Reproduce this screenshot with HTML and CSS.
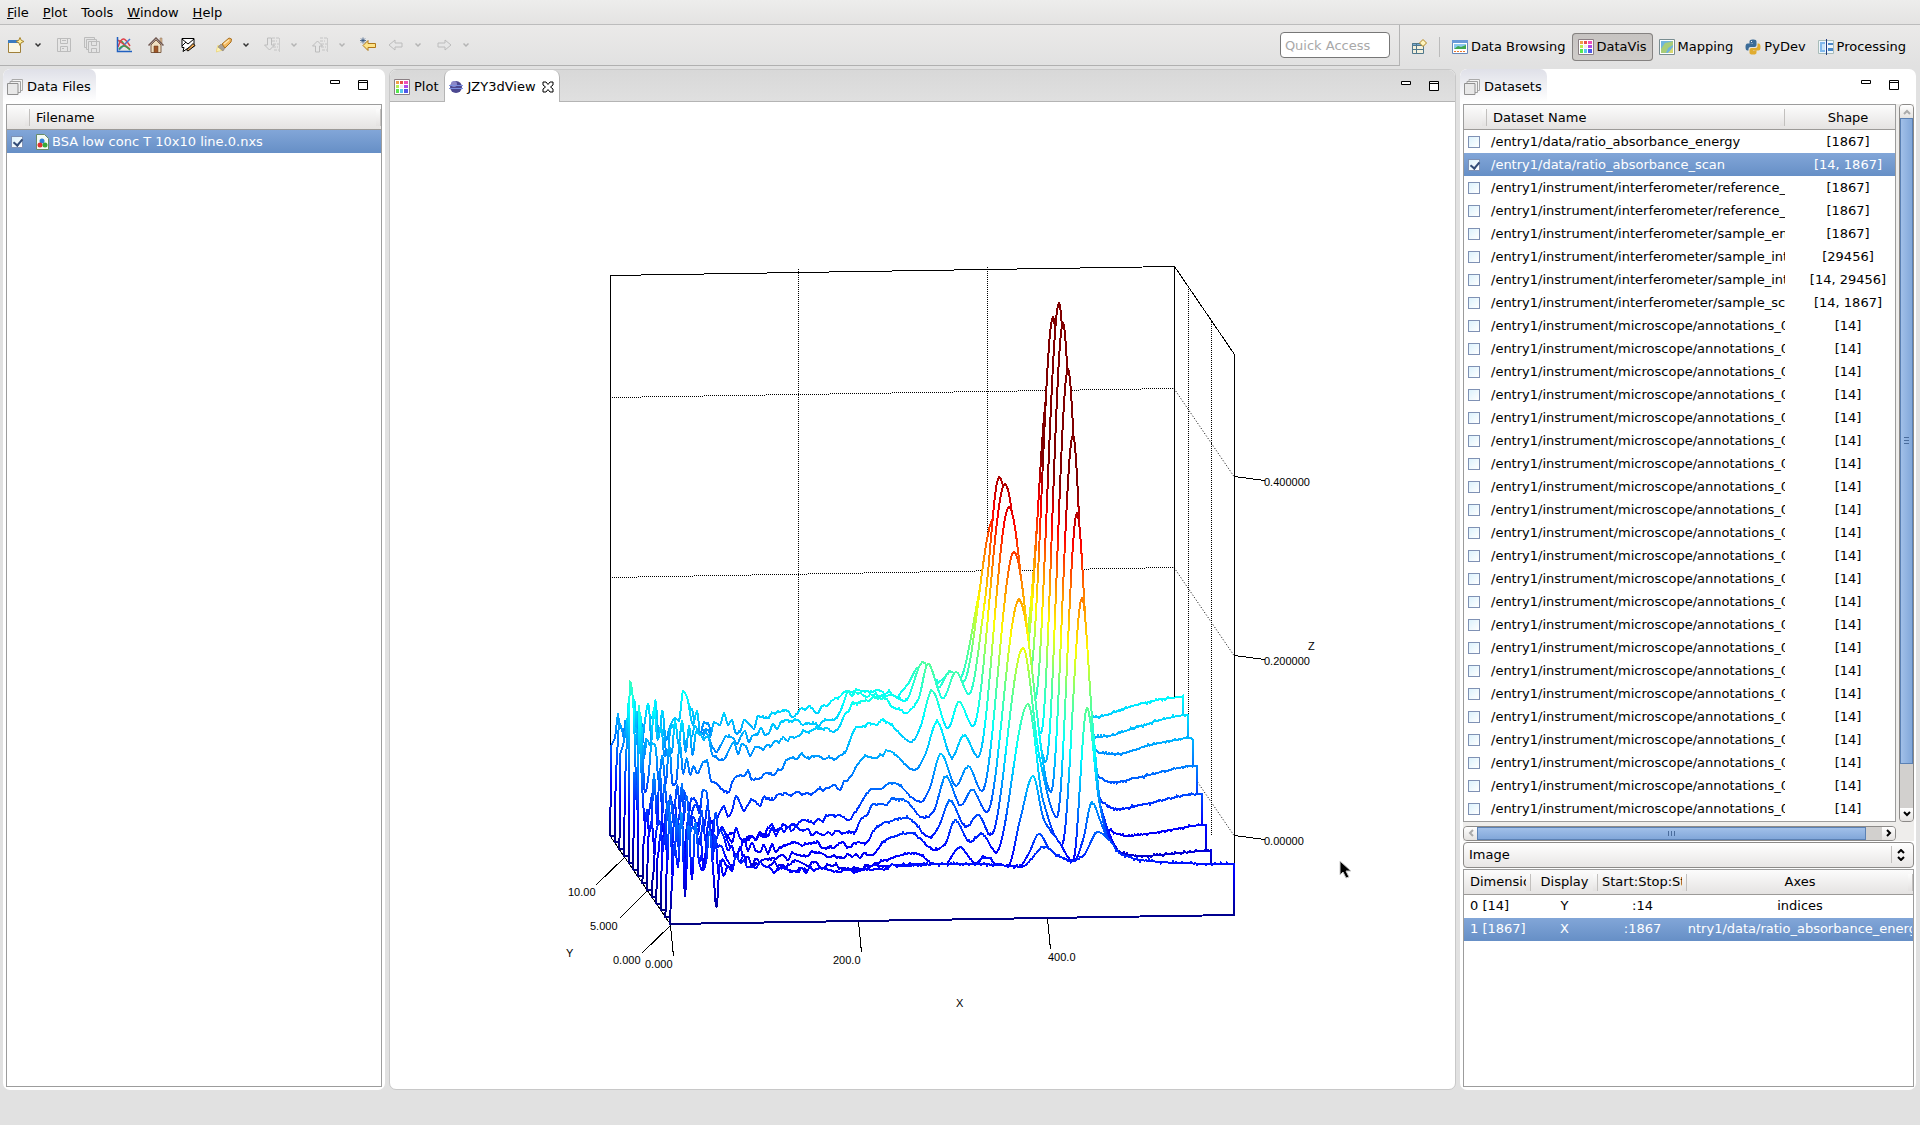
FILE: index.html
```
<!DOCTYPE html>
<html lang="en">
<head>
  <title>DataVis</title>
  <meta charset="UTF-8">
  <meta name="viewport" content="width=device-width, initial-scale=1.0">
  <link rel="stylesheet" href="styles.css">
</head>
<body>
  <!-- shared icons -->
  <svg class="defs" width="0" height="0">
    <symbol id="i-arrow" viewBox="0 0 6 6"><path d="M.5 1.500L3 4l2.500-2.500" fill="none" stroke="currentColor" stroke-width="1.500"/></symbol>
    <symbol id="i-stack" viewBox="0 0 16 16">
      <path d="M5 .5h10.500v11H5z" fill="#f4f4f4" stroke="#aaa"/>
      <path d="M3 2.500h10.500v11H3z" fill="#f0f0f0" stroke="#a0a0a0"/>
      <path d="M.5 4.500h10.500v11H.5z" fill="#e8e8e8" stroke="#909090"/>
    </symbol>
    <symbol id="i-grid" viewBox="0 0 16 16">
      <path d="M.5.5h15v15H.5z" fill="#fff" stroke="#8a7f84"/>
      <path d="M2 2h3v3H2z" fill="#f0a04a"/><path d="M6 2h3v3H6z" fill="#e8504a"/><path d="M10 2h4v3h-4z" fill="#ee50b8"/>
      <path d="M2 6h3v3H2z" fill="#b8ee50"/><path d="M6 6h3v3H6z" fill="#eee"/><path d="M10 6h4v3h-4z" fill="#b04ae8"/>
      <path d="M2 10h3v4H2z" fill="#58e850"/><path d="M6 10h3v4H6z" fill="#58c8ee"/><path d="M10 10h4v4h-4z" fill="#5058e8"/>
    </symbol>
    <symbol id="i-min" viewBox="0 0 10 12"><path d="M.5 1.500h9v3h-9z" fill="#fff" stroke="#000"/></symbol>
    <symbol id="i-max" viewBox="0 0 10 12"><path d="M.5 1.500h9v9h-9zM.5 3.500h9" fill="#fff" stroke="#000"/></symbol>
    <symbol id="i-back" viewBox="0 0 16 16"><path d="M1 8l6-5v3h7v4H7v3z" fill="currentColor" stroke="var(--edge)" stroke-linejoin="round"/></symbol>
    <symbol id="i-lines" viewBox="0 0 16 16">
      <path d="M8 1h7M8 4h5M9 7h6M9 10h5M10 13h5" stroke="#c4c4c4" stroke-dasharray="3 1"/>
      <path d="M15.500 1v14" stroke="#ccc"/>
    </symbol>
  </svg>

  <nav class="menubar">
    <a href="#"><u>F</u>ile</a>
    <a href="#"><u>P</u>lot</a>
    <a href="#">Tools</a>
    <a href="#"><u>W</u>indow</a>
    <a href="#"><u>H</u>elp</a>
  </nav>

  <header class="topbar">
    <div class="toolbar">
      <button class="tool" title="New"><svg viewBox="0 0 16 16">
        <path d="M.5 3.500h12v12H.5z" fill="#fbf7e4" stroke="#a0803a"/><path d="M0 3h12v3H0z" fill="#3c7cc0"/>
        <path d="M12 .5l1.200 2.800L16 4.500l-2.800 1.200L12 8.500l-1.200-2.800L8 4.500l2.800-1.200z" fill="#fdf0a0" stroke="#a8842c"/></svg></button>
      <button class="drop" title="New menu"><svg><use href="#i-arrow"/></svg></button>
      <i class="sep"></i>
      <button class="tool" title="Save" disabled><svg viewBox="0 0 16 16" fill="none" stroke="#bcbcbc">
        <path d="M1.500 1.500h13v13h-13zM4.500 1.500v5h7v-5M4.500 14.500v-5h7v5M6 3.500h4M6 11.500h2"/></svg></button>
      <button class="tool" title="Save All" disabled><svg viewBox="0 0 16 16" fill="#e4e4e4" stroke="#bcbcbc">
        <path d="M.5.5h10v10H.5z"/><path d="M2.500 2.500h10v10h-10z"/><path d="M4.500 4.500h11v11h-11zM7.500 4.500v4h5v-4M7.500 15.500v-4h5v4"/></svg></button>
      <i class="sep"></i>
      <button class="tool" title="Plot"><svg viewBox="0 0 16 16" fill="none" stroke-width="1.500">
        <path d="M3 5c3-5 5 6 11 7" stroke="#3c9c50"/><path d="M2 10c4-12 7-9 12-1" stroke="#e04048"/><path d="M3 13L9 7l5-5" stroke="#4878d0"/><path d="M2 3l12 9" stroke="#e04048"/><path d="M3 12c3-4 7-4 11 1" stroke="#3c9c50"/>
        <path d="M1.500 0v14.500H16" stroke="#2060c0"/></svg></button>
      <i class="sep"></i>
      <button class="tool" title="Home"><svg viewBox="0 0 16 16">
        <path d="M12 1h2v5h-2z" fill="#d8b890" stroke="#8a6a50" stroke-width=".5"/><path d="M3 8l5-5 5 5v7.500H3z" fill="#f0e0c0" stroke="#806048"/>
        <path d="M.5 8.500L8 1l7.500 7.500" fill="none" stroke="#705850" stroke-width="1.500"/><path d="M6 9h4v6.500H6z" fill="#a05828" stroke="#603820" stroke-width=".5"/></svg></button>
      <i class="sep"></i>
      <button class="tool" title="Feedback"><svg viewBox="0 0 16 16">
        <path d="M2 1.500h12v8l-5 1-6 4 1-4H2z" fill="#fff" stroke="#000"/><path d="M2 2l6 5 6-5M2 9l4-4" fill="none" stroke="#000"/>
        <path d="M6.500 13L13 6.500l2 2L8 14z" fill="#f0a850" stroke="#000"/></svg></button>
      <i class="sep wide"></i>
      <button class="tool" title="Search"><svg viewBox="0 0 16 16">
        <path d="M0 15l2-7 5 5z" fill="#fff4b0" stroke="#e8c850" stroke-width=".5"/><path d="M5 7l4 4-2 3-5-4z" fill="#a8a098" stroke="#787068" stroke-width=".5"/>
        <path d="M6 7l7-6 2.500 1-.5 3-6 6z" fill="#f4b860" stroke="#a87020"/><path d="M8 7l5-4" stroke="#fde8b8" stroke-width="1.500"/></svg></button>
      <button class="drop" title="Search menu"><svg><use href="#i-arrow"/></svg></button>
      <i class="sep"></i>
      <button class="tool" title="Next annotation" disabled><svg viewBox="0 0 16 16"><use href="#i-lines"/>
        <path d="M3.500 1h4v7h3L5.500 13l-5-5h3z" fill="#e6e6e6" stroke="#bcbcbc"/></svg></button>
      <button class="drop" title="Next menu" disabled><svg><use href="#i-arrow"/></svg></button>
      <i class="sep"></i>
      <button class="tool" title="Previous annotation" disabled><svg viewBox="0 0 16 16"><use href="#i-lines"/>
        <path d="M3.500 15h4V9h3L5.500 4l-5 5h3z" fill="#e6e6e6" stroke="#bcbcbc"/></svg></button>
      <button class="drop" title="Previous menu" disabled><svg><use href="#i-arrow"/></svg></button>
      <i class="sep"></i>
      <button class="tool" title="Last edit location"><svg viewBox="0 0 16 16">
        <path d="M3 8.500l5-5v3h7.500v4H8v3z" fill="#fde288" stroke="#b07818"/><path d="M0 3.500h6M3 .5v6M1 1.500l4 4M5 1.500l-4 4" stroke="#30507c" stroke-width=".8"/></svg></button>
      <button class="tool" title="Back" disabled><svg><use href="#i-back"/></svg></button>
      <button class="drop" title="Back menu" disabled><svg><use href="#i-arrow"/></svg></button>
      <i class="sep"></i>
      <button class="tool flip" title="Forward" disabled><svg><use href="#i-back"/></svg></button>
      <button class="drop" title="Forward menu" disabled><svg><use href="#i-arrow"/></svg></button>
      <input class="quick-access" type="text" placeholder="Quick Access" aria-label="Quick Access">
    </div>
    <div class="perspectives">
      <button class="persp open" title="Open Perspective"><svg viewBox="0 0 16 16">
        <path d="M1.500 4.500h11v10h-11z" fill="#f4f0dc" stroke="#50788c"/><path d="M1.500 4.500h11v2h-11zM5.500 4v10.500M1.500 10.500h11" fill="#78a8d0" stroke="#50788c"/>
        <path d="M12 .5l3.500 3.500L12 7.500 8.500 4z" fill="#fdf4c0" stroke="#b08420"/></svg></button>
      <i class="bar"></i>
      <button class="persp"><svg viewBox="0 0 16 16">
        <path d="M.5 1.500h15v13H.5z" fill="#fff" stroke="#6888b8"/><path d="M0 1h16v3H0z" fill="#6a9ad8"/><path d="M2 5h12v5H2z" fill="#8cc8f0"/><path d="M2 10l4-3 3 1 5-2v4z" fill="#40a850"/><path d="M2 12.500h12" stroke="#e87830" stroke-dasharray="2 1"/></svg>Data Browsing</button>
      <button class="persp active"><svg><use href="#i-grid"/></svg>DataVis</button>
      <button class="persp"><svg viewBox="0 0 16 16">
        <path d="M.5.5h15v15H.5z" fill="#fff" stroke="#788c90"/><path d="M2 2h12v12H2z" fill="#70b4dc"/><path d="M2 10l4-6 5-1 3-1v4l-5 3-2 5H2z" fill="#a8cc78"/><path d="M9 14l5-6v6z" fill="#d8d870"/></svg>Mapping</button>
      <button class="persp"><svg viewBox="0 0 16 16">
        <path d="M4.500 4.500V2.500Q4.500.5 7.500.5h1q3 0 3 2V6q0 2-2 2h-4q-2 0-2 2v1.500H2.500q-2 0-2-3.500t2-3.500H8V4z" fill="#3c6c98"/>
        <path d="M11.500 11.500v2q0 2-3 2h-1q-3 0-3-2V11q0-2 2-2h4q2 0 2-2V4.500h1q2 0 2 3.500t-2 3.500H8v.5z" fill="#e0ac30"/><path d="M6 2h1v1H6z" fill="#fff"/></svg>PyDev</button>
      <button class="persp"><svg viewBox="0 0 16 16">
        <path d="M.5 1.500h15v13H.5z" fill="#eef6fc" stroke="#a8bcb8"/><path d="M2 3h5v10H2z" fill="#80b8ec"/><path d="M4 5h3v6H4z" fill="#c8e4f8"/><path d="M10 4h5v2h-5zM10 9h5v3h-5z" fill="#4888c8"/><path d="M8.500 0v16" stroke="#203c80"/></svg>Processing</button>
    </div>
  </header>

  <main class="workbench">
    <section class="panel">
      <div class="tabs plain">
        <button class="tab soft"><svg><use href="#i-stack"/></svg>Data Files</button>
        <span class="win"><button title="Minimize"><svg><use href="#i-min"/></svg></button><button title="Maximize"><svg><use href="#i-max"/></svg></button></span>
      </div>
      <div class="panel-body">
        <div class="grid-box fill">
          <table class="grid files">
            <colgroup><col class="c-check"><col></colgroup>
            <thead><tr><th></th><th>Filename</th></tr></thead>
            <tbody>
              <tr class="selected">
                <td><input type="checkbox" id="file0" checked></td>
                <td><label for="file0"><svg viewBox="0 0 16 16">
                  <path d="M2.500.5h8l4 4v11h-12z" fill="#f4faf4" stroke="#688c68"/><circle cx="8" cy="7" r="2.500" fill="#3080d8"/><circle cx="6" cy="11" r="2.500" fill="#e03030"/><circle cx="11" cy="11" r="2.500" fill="#38a838"/></svg>BSA low conc T 10x10 line.0.nxs</label></td>
              </tr>
            </tbody>
          </table>
        </div>
      </div>
    </section>

    <section class="panel editor">
      <div class="tabs">
        <button class="tab"><svg><use href="#i-grid"/></svg>Plot</button>
        <button class="tab current"><svg viewBox="0 0 16 16">
          <circle cx="8" cy="8" r="6" fill="#4c4890"/><circle cx="6" cy="5" r="3" fill="#8c88c8"/><path d="M1 6.500h14M1 9.500h14" stroke="#7c90e0"/></svg>JZY3dView
          <svg class="close" viewBox="0 0 12 12"><path d="M1 1h3l2 2.500L8 1h3v3L8.500 6 11 8v3H8L6 8.500 4 11H1V8l2.500-2L1 4z" fill="#fff" stroke="#000"/></svg></button>
        <span class="win"><button title="Minimize"><svg><use href="#i-min"/></svg></button><button title="Maximize"><svg><use href="#i-max"/></svg></button></span>
      </div>
      <div class="plot">
        <svg id="chart" viewBox="390 102 1065 987">
          <g class="dots">
            <path d="M798.500 269V836M987.500 267V836M1188.500 287V836M1211.500 320V836"/>
            <path d="M610 397.500L1174 388.500M610 577.500L1174 567.500M610 757.500L1174 747.500"/>
            <path class="side" d="M1174 388.500L1234 476.500M1174 567.500L1234 655.500M1174 747.500L1234 835.500"/>
          </g>
          <g class="axes">
            <path d="M610.500 836V275.500L1174.500 266.500V747M1174.500 266.500L1234.500 354.500V915"/>
            <path d="M1234 476.500l31 4M1234 655.500l31 4M1234 835.500l31 4"/>
            <path d="M624.500 857.500l-28 27M647.500 890.500l-28 28M670.500 925.500l-28 27M610.500 836.500l60 88"/>
            <path d="M670.500 925.500l3 31M858.500 921.500l3 31M1047.500 918.500l3 31"/>
          </g>
          <g id="traces"></g>
          <g class="labels">
            <text x="1264" y="486">0.400000</text>
            <text x="1264" y="665">0.200000</text>
            <text x="1264" y="845">0.00000</text>
            <text x="1308" y="650">Z</text>
            <text x="568" y="896">10.00</text>
            <text x="590" y="930">5.000</text>
            <text x="613" y="964">0.000</text>
            <text x="645" y="968">0.000</text>
            <text x="833" y="964">200.0</text>
            <text x="1048" y="961">400.0</text>
            <text x="566" y="957">Y</text>
            <text x="956" y="1007">X</text>
          </g>
          <path class="pointer" d="M1340 861v14l3-3 3 6 3-1-3-6h5z"/>
        </svg>
      </div>
    </section>

    <section class="panel">
      <div class="tabs plain">
        <button class="tab soft"><svg><use href="#i-stack"/></svg>Datasets</button>
        <span class="win"><button title="Minimize"><svg><use href="#i-min"/></svg></button><button title="Maximize"><svg><use href="#i-max"/></svg></button></span>
      </div>
      <div class="panel-body">
        <div class="scroll-area">
          <div class="grid-box">
            <table class="grid datasets">
              <colgroup><col class="c-check"><col><col class="c-shape"></colgroup>
              <thead><tr><th></th><th>Dataset Name</th><th>Shape</th></tr></thead>
              <tbody id="datasets"></tbody>
            </table>
          </div>
          <div class="scroll vertical">
            <button class="off" title="Up"><svg viewBox="0 0 8 8"><path d="M1 6l3-3 3 3"/></svg></button>
            <div class="thumb"><i></i></div>
            <div class="track"></div>
            <button title="Down"><svg viewBox="0 0 8 8"><path d="M1 2l3 3 3-3"/></svg></button>
          </div>
          <div class="scroll horizontal">
            <button class="off" title="Left"><svg viewBox="0 0 8 8"><path d="M6 1L3 4l3 3"/></svg></button>
            <div class="thumb"><i></i></div>
            <div class="track"></div>
            <button title="Right"><svg viewBox="0 0 8 8"><path d="M2 1l3 3-3 3"/></svg></button>
          </div>
        </div>
        <div class="combo">
          <select aria-label="Plot type"><option>Image</option><option>Line</option></select>
          <svg viewBox="0 0 8 12"><path d="M1 4l3-3 3 3M1 8l3 3 3-3"/></svg>
        </div>
        <div class="grid-box slice-box">
          <table class="grid slices">
            <colgroup><col class="c-dim"><col class="c-dim"><col class="c-slice"><col></colgroup>
            <thead><tr><th>Dimension</th><th>Display</th><th>Start:Stop:Step</th><th>Axes</th></tr></thead>
            <tbody>
              <tr><td>0 [14]</td><td>Y</td><td>:14</td><td><span>indices</span></td></tr>
              <tr class="selected"><td>1 [1867]</td><td>X</td><td>:1867</td><td><span>/entry1/data/ratio_absorbance_energy</span></td></tr>
            </tbody>
          </table>
        </div>
      </div>
    </section>
  </main>
  <script src="app.js"></script>
</body>
</html>
```
FILE: styles.css
```
:root {
  --bg: #e1e1e1;
  --line: #b4b4b4;
  --grid-border: #9c9c9c;
  --select-top: #82a6d8;
  --select-bottom: #668fc6;
}
* {
  box-sizing: border-box;
  margin: 0;
  padding: 0;
}
body {
  height: 100vh;
  display: flex;
  flex-direction: column;
  background: var(--bg);
  color: #000;
  font: 13px/16px "DejaVu Sans", sans-serif;
  overflow: hidden;
}
button, input, select {
  font: inherit;
  color: inherit;
  border: none;
  background: none;
}
svg {
  flex: none;
}
.defs {
  position: absolute;
}

/* menu bar */
.menubar {
  display: flex;
  align-items: center;
  gap: 14px;
  height: 25px;
  padding: 2px 7px 0;
  background: linear-gradient(#ededec, #e4e3e2);
  border-bottom: 1px solid #bcbcbc;
}
.menubar a {
  color: #000;
  text-decoration: none;
}

/* toolbar */
.topbar {
  display: flex;
  height: 41px;
  margin-bottom: 3px;
  background: linear-gradient(#ebeae9, #e1e1e1);
}
.toolbar {
  flex: 1;
  display: flex;
  align-items: center;
  padding: 0 9px 0 2px;
  border-right: 1px solid var(--line);
  border-bottom: 1px solid #b0b0b0;
}
.tool {
  width: 28px;
  height: 24px;
  padding: 4px 6px;
  color: #e6e6e6;
  --edge: #bcbcbc;
}
.tool svg {
  display: block;
  width: 16px;
  height: 16px;
}
.flip svg {
  transform: scaleX(-1);
}
.drop {
  width: 16px;
  height: 24px;
  color: #333;
}
.drop:disabled {
  color: #b4b4b4;
}
.drop svg {
  display: block;
  width: 6px;
  height: 6px;
  margin: 0 5px;
}
.sep {
  width: 4px;
}
.sep.wide {
  width: 8px;
}
.quick-access {
  width: 110px;
  height: 26px;
  margin-left: auto;
  padding: 0 4px;
  background: #fff;
  border: 1px solid #777;
  border-radius: 4px;
}
.quick-access::placeholder {
  color: #a8a8a8;
  opacity: 1;
}
.perspectives {
  display: flex;
  align-items: center;
  padding: 2px 8px 0 5px;
}
.persp {
  display: flex;
  align-items: center;
  gap: 3px;
  height: 28px;
  padding: 0 6px;
  border-radius: 4px;
}
.persp svg {
  width: 16px;
  height: 16px;
}
.persp.active {
  background: linear-gradient(#c6c3c1, #d0cdca);
  box-shadow: inset 0 0 0 1px #858281;
}
.bar {
  width: 1px;
  height: 20px;
  margin: 0 6px;
  background: #bbb;
}

/* workbench */
.workbench {
  flex: 1;
  min-height: 0;
  display: grid;
  grid-template-columns: minmax(0, 382fr) minmax(0, 1067fr) minmax(0, 456fr);
  gap: 4px;
  padding: 0 4px 35px 3px;
}
.panel {
  display: flex;
  flex-direction: column;
  min-height: 0;
  background: #fff;
  border-radius: 7px;
  overflow: hidden;
}
.editor {
  border: 1px solid #c8c8c8;
}
.tabs {
  display: flex;
  height: 32px;
  background: linear-gradient(#d8d8d8, #e0e0e0);
  box-shadow: inset 0 -1px #b4b4b4;
}
.tabs.plain {
  height: 33px;
  background: none;
  box-shadow: none;
}
.tab {
  display: flex;
  align-items: center;
  gap: 4px;
  padding: 2px 5px 0 4px;
}
.tab svg {
  width: 16px;
  height: 16px;
}
.tab.soft {
  background: linear-gradient(#dfe0e8, #fff);
  border-radius: 7px 7px 0 0;
}
.tab.current {
  padding-left: 3px;
  background: #fff;
  border: 1px solid #b4b4b4;
  border-width: 0 1px;
  border-radius: 7px 7px 0 0;
}
.tab .close {
  width: 12px;
  height: 12px;
  margin-left: 2px;
}
.win {
  display: flex;
  gap: 18px;
  margin: 10px 17px 0 auto;
}
.editor .win {
  margin-right: 16px;
}
.win button,
.win svg {
  display: block;
  width: 10px;
  height: 12px;
}
.panel-body {
  flex: 1;
  min-height: 0;
  display: flex;
  flex-direction: column;
  padding: 2px 2px 3px 3px;
}

/* tables */
.grid-box {
  min-width: 0;
  min-height: 0;
  background: #fff;
  border: 1px solid var(--grid-border);
  overflow: hidden;
}
.grid-box.fill {
  flex: 1;
  margin-right: 1px;
}
.slice-box {
  flex: 217 0 0;
}
.grid {
  width: 100%;
  table-layout: fixed;
  border-collapse: collapse;
}
.grid th,
.grid td {
  padding: 0 4px;
  font-weight: normal;
  text-align: center;
  white-space: nowrap;
  overflow: hidden;
}
.grid th {
  position: relative;
  height: 25px;
  background: linear-gradient(#fcfcfc, #e4e2e1);
  box-shadow: inset 0 -1px #9c9a98;
}
.grid th::after {
  content: "";
  position: absolute;
  right: 0;
  top: 4px;
  width: 4px;
  height: 17px;
  background: inherit;
  border-right: 1px solid #c2c0be;
}
.datasets th:last-child::after {
  display: none;
}
.grid td {
  height: 23px;
}
.grid .selected td {
  color: #fff;
}
.grid .selected {
  background: linear-gradient(var(--select-top), var(--select-bottom));
}
.c-check { width: 23px; }
.c-shape { width: 110px; }
.c-dim { width: 67px; }
.c-slice { width: 89px; }
.files th:nth-child(2),
.datasets th:nth-child(2) {
  padding: 0 0 0 6px;
  text-align: left;
}
.files td:nth-child(2),
.datasets td:nth-child(2) {
  padding: 0 0 0 4px;
  text-align: left;
}
.grid.datasets th:last-child,
.grid.datasets td:last-child {
  padding: 0 0 0 16px;
}
.files label {
  display: flex;
  align-items: center;
  gap: 2px;
}
.files label svg {
  width: 16px;
  height: 16px;
}
.slices th:first-child,
.slices td:first-child {
  padding-left: 6px;
  text-align: left;
}
.grid.slices td:last-child {
  padding: 0 1px;
}
.slices td span {
  display: flex;
  justify-content: center;
  overflow: hidden;
}
input[type="checkbox"] {
  appearance: none;
  display: block;
  position: relative;
  width: 12px;
  height: 12px;
  background: linear-gradient(135deg, #dcf2fc, #fff);
  border: 1px solid #7f91b4;
}
input[type="checkbox"]:checked::before {
  content: "";
  position: absolute;
  left: 3px;
  top: 0;
  width: 4px;
  height: 7px;
  border: solid #334d78;
  border-width: 0 2px 2px 0;
  transform: rotate(40deg);
}

/* scrolled table */
.scroll-area {
  flex: 739 0 0;
  min-height: 0;
  display: grid;
  grid-template-columns: minmax(0, 1fr) 15px;
  grid-template-rows: minmax(0, 1fr) 15px;
  gap: 4px 3px;
  background: #eeedeb;
}
.scroll {
  display: flex;
  background: #d2d0ce;
  border: 1px solid #8c8a88;
  border-radius: 4px;
  overflow: hidden;
}
.vertical {
  flex-direction: column;
}
.scroll button {
  flex: 0 0 13px;
  display: flex;
  align-items: center;
  justify-content: center;
  background: linear-gradient(#fff, #e4e2e0);
}
.scroll button svg {
  width: 8px;
  height: 8px;
  fill: none;
  stroke: #000;
  stroke-width: 2;
}
.scroll .off svg {
  stroke: #aaa;
}
.thumb {
  flex: 647;
  display: flex;
  align-items: center;
  justify-content: center;
  background: linear-gradient(90deg, #a4c2ea, #7fa5d8);
  box-shadow: inset 0 0 0 1px #5b81b4;
}
.track {
  flex: 44;
}
.horizontal .thumb {
  flex: 388;
  background: linear-gradient(#a4c2ea, #7fa5d8);
}
.horizontal .track {
  flex: 16;
}
.thumb i {
  width: 7px;
  height: 5px;
  background: repeating-linear-gradient(90deg, #4a6c9c 0 1px, transparent 1px 3px);
}
.vertical .thumb i {
  width: 5px;
  height: 7px;
  background: repeating-linear-gradient(#4a6c9c 0 1px, transparent 1px 3px);
}

/* combo */
.combo {
  position: relative;
  display: flex;
  margin: 1px 0;
}
.combo select {
  flex: 1;
  appearance: none;
  height: 26px;
  padding: 0 5px;
  background: linear-gradient(#fff, #e8e6e5);
  border: 1px solid #8c8a88;
  border-radius: 4px;
}
.combo svg {
  position: absolute;
  right: 9px;
  top: 7px;
  width: 8px;
  height: 12px;
  fill: none;
  stroke: #000;
  stroke-width: 2;
  pointer-events: none;
}
.combo::after {
  content: "";
  position: absolute;
  right: 22px;
  top: 4px;
  height: 17px;
  border-right: 1px solid #c2c0be;
}

/* 3d plot */
.plot {
  flex: 1;
  min-height: 0;
}
#chart {
  display: block;
  width: 100%;
  height: 100%;
}
.dots,
.axes {
  fill: none;
  stroke: #000;
  shape-rendering: crispEdges;
}
.dots {
  stroke-dasharray: 1 1;
}
.dots .side {
  stroke-dasharray: 1 2;
  shape-rendering: auto;
}
#traces path {
  fill: #fff;
  stroke-width: 2;
  stroke-linejoin: round;
  shape-rendering: crispEdges;
}
.labels {
  font: 11px "Liberation Sans", sans-serif;
}
.pointer {
  fill: #000;
  stroke: #ccc;
}
```
FILE: app.js
```
// datasets table
const mic = '/entry1/instrument/microscope/annotations_0';
const inter = '/entry1/instrument/interferometer/';
const datasets = [
  ['/entry1/data/ratio_absorbance_energy', '[1867]'],
  ['/entry1/data/ratio_absorbance_scan', '[14, 1867]'],
  [inter + 'reference_', '[1867]'],
  [inter + 'reference_', '[1867]'],
  [inter + 'sample_en', '[1867]'],
  [inter + 'sample_int', '[29456]'],
  [inter + 'sample_int', '[14, 29456]'],
  [inter + 'sample_sc', '[14, 1867]']
];
while (datasets.length < 30) datasets.push([mic, '[14]']);

document.getElementById('datasets').innerHTML = datasets.map(([name, shape], i) => {
  const on = i === 1;
  return `<tr${on ? ' class="selected"' : ''}><td><input type="checkbox" id="ds${i}"${on ? ' checked' : ''}></td>` +
    `<td><label for="ds${i}">${name}</label></td><td>${shape}</td></tr>`;
}).join('');

// turning points of each spectrum, front (0) to back (13)
const spectra = [
  [728,866, 740,862, 770,868, 790,872, 820,868, 850,870, 880,869, 900,866, 945,864, 980,864, 1010,866, 1022,867, 1032,858, 1044,847, 1060,857, 1073,861, 1083,856, 1098,832, 1109,840, 1120,853, 1140,860, 1180,863, 1234,864],
  [728,868, 770,872, 800,869, 850,872, 880,866, 920,864, 950,867, 975,866, 983,858, 989,858, 996,865, 1018,868, 1028,855, 1039,834, 1052,853, 1074,861, 1083,840, 1092,802, 1100,820, 1107,837, 1120,856, 1140,870, 1229,876],
  [728,862, 770,866, 800,862, 850,870, 880,862, 916,853, 935,865, 945,864, 960,847, 975,863, 984,857, 992,864, 1008,866, 1020,820, 1033,776, 1044,820, 1058,840, 1073,861, 1087,708, 1099,800, 1108,838, 1124,860, 1224,876],
  [728,850, 760,862, 800,855, 820,853, 840,857, 870,855, 885,840, 911,833, 935,850, 945,844, 955,820, 970,842, 982,834, 996,852, 1028,704, 1043,800, 1062,845, 1082,598, 1093,729, 1104,830, 1124,860, 1220,876],
  [728,842, 760,852, 790,843, 830,846, 865,843, 882,824, 907,818, 930,837, 938,828, 950,801, 966,827, 978,815, 991,835, 1023,648, 1040,760, 1057,817, 1077,513, 1089,680, 1101,810, 1124,860, 1216,876],
  [720,832, 740,838, 760,834, 800,830, 820,834, 840,832, 855,832, 873,804, 902,799, 924,818, 933,812, 946,777, 961,805, 972,790, 987,812, 1019,600, 1051,792, 1073,435, 1085,640, 1099,800, 1122,853, 1140,856, 1212,851],
  [710,822, 740,838, 760,832, 780,828, 810,822, 832,815, 850,820, 868,792, 893,783, 921,802, 929,790, 941,754, 956,786, 968,766, 982,791, 1014,552, 1046,761, 1068,369, 1081,600, 1095,780, 1107,828, 1127,836, 1153,833, 1207,825],
  [695,800, 720,812, 740,803, 770,800, 790,796, 815,792, 830,787, 840,790, 852,775, 863,758, 892,752, 915,770, 925,755, 937,722, 952,757, 964,735, 978,757, 1009,507, 1041,733, 1063,323, 1076,560, 1090,740, 1102,802, 1120,809, 1140,805, 1202,794],
  [703,763, 715,782, 725,791, 740,775, 770,773, 793,758, 820,756, 835,760, 845,753, 857,727, 887,722, 912,742, 920,728, 932,691, 948,728, 959,702, 973,726, 1005,484, 1035,700, 1059,303, 1072,540, 1086,720, 1100,778, 1113,782, 1140,777, 1198,766],
  [700,735, 717,758, 723,760, 730,748, 763,750, 783,737, 800,735, 817,727, 837,730, 853,702, 880,698, 905,713, 918,700, 928,664, 943,698, 956,672, 969,694, 985,600, 999,477, 1030,673, 1053,317, 1066,540, 1085,710, 1099,753, 1117,754, 1147,746, 1193,738],
  [700,740, 722,743, 733,738, 757,735, 787,720, 803,725, 830,720, 840,712, 848,692, 863,695, 890,695, 905,701, 923,662, 938,688, 950,671, 963,682, 994,518, 1026,650, 1049,385, 1060,560, 1080,690, 1097,737, 1108,736, 1137,727, 1160,720, 1189,715],
  [675,718, 693,725, 710,737, 720,725, 750,725, 767,718, 780,712, 797,714, 810,706, 817,714, 823,705, 847,691, 877,690, 897,698, 908,684, 918,668, 936,684, 946,677, 958,681, 990,560, 1025,640, 1046,450, 1060,590, 1080,690, 1095,717, 1123,709, 1143,703, 1184,697],
  [680,735, 720,735, 800,725, 850,700, 900,700, 915,680, 940,682, 958,684, 987,600, 1024,640, 1045,510, 1060,640, 1095,720, 1179,705],
  [680,740, 720,740, 800,730, 850,708, 900,705, 940,690, 958,688, 984,630, 1024,650, 1044,560, 1060,650, 1095,730, 1174,715]
];
// forced samples near the noisy left end
const spikes = { 9: [[629, 681], [634, 700]], 7: [[640, 706]], 0: [[672, 896], [684, 896], [698, 862], [715, 907], [722, 876]] };

let seed = 20;
function rnd() {
  seed = (seed * 16807) % 2147483647;
  return seed / 2147483647 * 2 - 1;
}

// monotone cubic through the points, sampled every 1px
function curve(px, py) {
  const n = px.length, d = [], m = [0];
  for (let i = 0; i < n - 1; i++) d.push((py[i + 1] - py[i]) / (px[i + 1] - px[i]));
  for (let i = 1; i < n - 1; i++) m.push(d[i - 1] * d[i] <= 0 ? 0 : 2 * d[i - 1] * d[i] / (d[i - 1] + d[i]));
  m.push(0);
  const out = [];
  for (let i = 0; i < n - 1; i++) {
    const h = px[i + 1] - px[i];
    const steps = Math.max(1, Math.round(h));
    for (let s = 0; s < steps; s++) {
      const t = s / steps, t2 = t * t, t3 = t2 * t;
      out.push([px[i] + t * h,
        (2 * t3 - 3 * t2 + 1) * py[i] + (t3 - 2 * t2 + t) * h * m[i] + (3 * t2 - 2 * t3) * py[i + 1] + (t3 - t2) * h * m[i + 1]]);
    }
  }
  out.push([px[n - 1], py[n - 1]]);
  return out;
}

const jet = [[0, '#000080'], [.125, '#0000ff'], [.375, '#00ffff'], [.5, '#60ff90'], [.625, '#ffff00'], [.875, '#ff0000'], [1, '#800000']];
let svg = '';
for (let k = 13; k >= 0; k--) {
  const x0 = 670 - 4.6 * k, x1 = 1234 - 4.6 * k;
  const y0 = 924 - 6.8 * k, y1 = 915 - 6.8 * k;
  const p = spectra[k];
  const px = [], py = [];
  // noisy start, swinging up and down around the first point
  let side = 1;
  for (let x = x0 + 1; x < p[0] - 3; x += 3.500) {
    const amp = 14 + 40 * Math.exp(-(x - x0) / 34);
    px.push(x);
    py.push(Math.min(y0 - 8, p[1] + (k > 6 ? 4 : -12) + side * (.5 + rnd() * .5) * amp));
    if (rnd() > -.5) side = -side;
  }
  for (let i = 0; i < p.length; i += 2) {
    // wiggle between the first turning points
    if (i && p[i] < 910) {
      const a = p[i - 2], b = p[i];
      for (let x = a + 4; x < b - 3; x += 4) {
        const t = (x - a) / (b - a);
        px.push(x);
        py.push(p[i - 1] + t * (p[i + 1] - p[i - 1]) + rnd() * (3 + 22 * Math.exp(-(x - 695) / 35)));
      }
    }
    px.push(p[i]);
    py.push(p[i + 1]);
  }
  (spikes[k] || []).forEach(([x, y]) => {
    let j = 0;
    px.forEach((v, i) => { if (Math.abs(v - x) < Math.abs(px[j] - x)) j = i; });
    py[j] = y;
  });
  px[px.length - 1] = x1;
  // fine detector noise on the flat parts
  const pts = curve(px, py).map(([x, y], i, all) => {
    const next = all[i + 1] || all[i];
    const flat = Math.abs(next[1] - y) < 1.500;
    return x.toFixed(1) + ' ' + (y + (flat && i % 3 === 0 ? rnd() * 1.800 : 0)).toFixed(1);
  });
  svg += `<linearGradient id="g${k}" gradientUnits="userSpaceOnUse" x1="0" x2="0" y1="${y0 - 3}" y2="${y0 - 403}">` +
    jet.map(([o, c]) => `<stop offset="${o}" stop-color="${c}"/>`).join('') + '</linearGradient>' +
    `<path stroke="url(#g${k})" d="M${x0} ${y0}L${pts.join('L')}L${x1} ${y1}Z"/>`;
}
document.getElementById('traces').innerHTML = svg;
```
